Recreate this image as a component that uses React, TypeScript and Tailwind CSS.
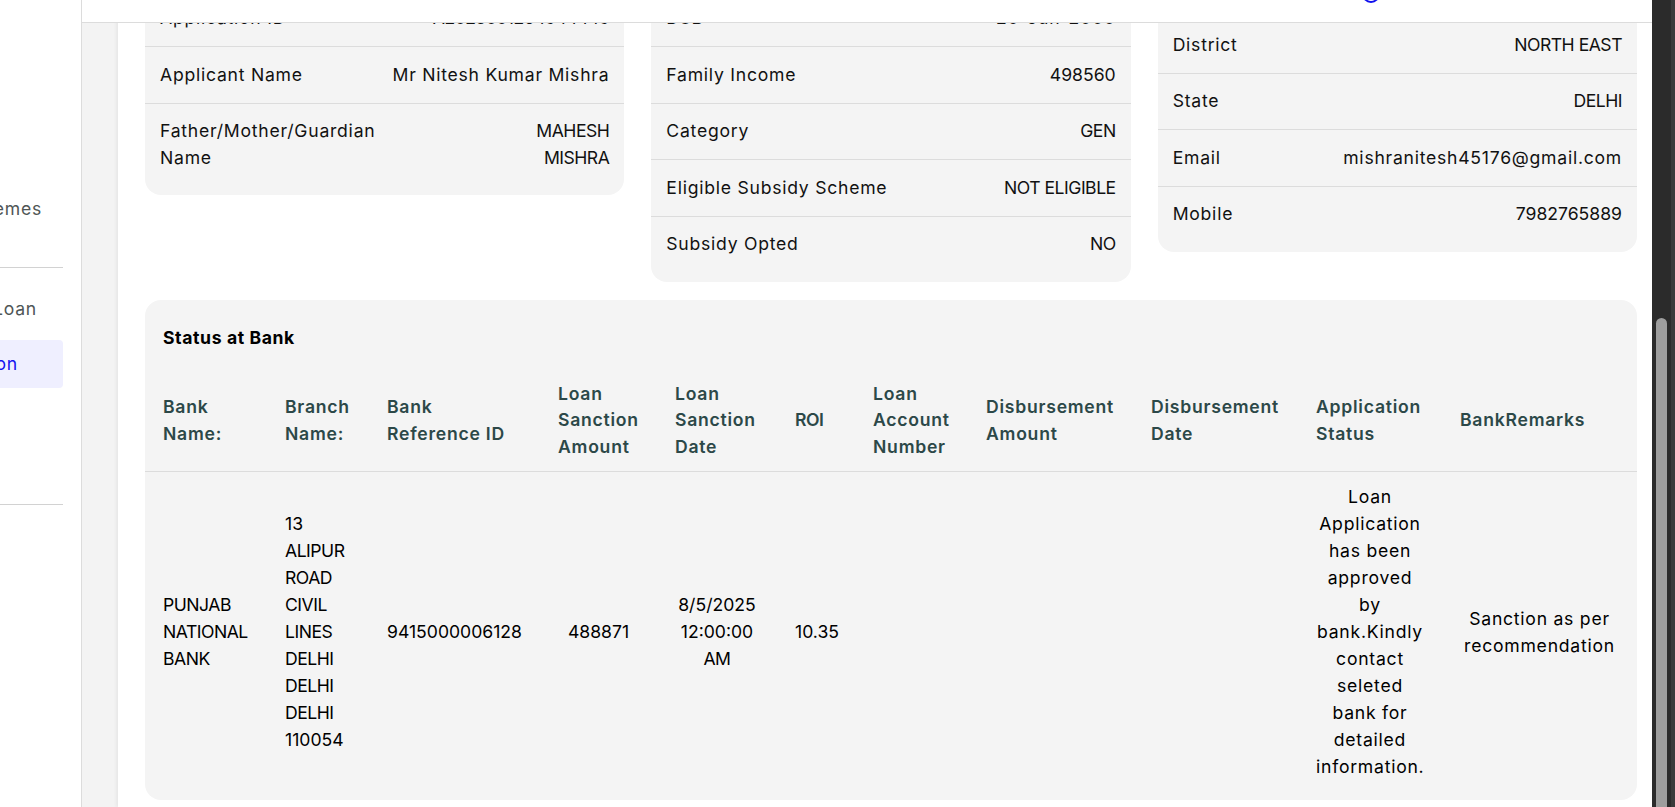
import React from "react";

type Row = { label: string[]; value: string[] };

const card1: Row[] = [
  { label: ["Loan Type"], value: ["Education Loan"] },
  { label: ["Application ID"], value: ["A2025001264944449"] },
  { label: ["Applicant Name"], value: ["Mr Nitesh Kumar Mishra"] },
  { label: ["Father/Mother/Guardian", "Name"], value: ["MAHESH", "MISHRA"] },
];

const card2: Row[] = [
  { label: ["Gender"], value: ["MALE"] },
  { label: ["DOB"], value: ["20-Jun-2000"] },
  { label: ["Family Income"], value: ["498560"] },
  { label: ["Category"], value: ["GEN"] },
  { label: ["Eligible Subsidy Scheme"], value: ["NOT ELIGIBLE"] },
  { label: ["Subsidy Opted"], value: ["NO"] },
];

const card3: Row[] = [
  { label: ["Address"], value: ["H NO 12 GALI NO 4", "KARAWAL NAGAR"] },
  { label: ["District"], value: ["NORTH EAST"] },
  { label: ["State"], value: ["DELHI"] },
  { label: ["Email"], value: ["mishranitesh45176@gmail.com"] },
  { label: ["Mobile"], value: ["7982765889"] },
];

function track(t: string) {
  if (/[a-z]/.test(t)) return "tracking-[0.75px]";
  if (/[A-Z]/.test(t)) return "tracking-[-0.5px]";
  return "tracking-[0px]";
}

function Line({ t }: { t: string }) {
  return <div className={"whitespace-nowrap " + track(t)}>{t}</div>;
}

function InfoCard({ rows }: { rows: Row[] }) {
  return (
    <div className="rounded-2xl bg-[#f4f4f4] pt-[9px] pb-[9px]">
      {rows.map((r, i) => (
        <div
          key={i}
          className={
            "flex justify-between gap-4 px-[15px] py-[14.5px] leading-[26.6px] " +
            (i < rows.length - 1 ? "border-b border-[#dcdcdc]" : "")
          }
        >
          <div className="text-left">
            {r.label.map((t, j) => (
              <Line key={j} t={t} />
            ))}
          </div>
          <div className="text-right">
            {r.value.map((t, j) => (
              <Line key={j} t={t} />
            ))}
          </div>
        </div>
      ))}
    </div>
  );
}

type Col = { w: string; head: string[]; body: string[]; align: "left" | "center" };

const cols: Col[] = [
  { w: "w-[122px]", head: ["Bank", "Name:"], body: ["PUNJAB", "NATIONAL", "BANK"], align: "left" },
  {
    w: "w-[102px]",
    head: ["Branch", "Name:"],
    body: ["13", "ALIPUR", "ROAD", "CIVIL", "LINES", "DELHI", "DELHI", "DELHI", "110054"],
    align: "left",
  },
  { w: "w-[171px]", head: ["Bank", "Reference ID"], body: ["9415000006128"], align: "left" },
  { w: "w-[117px]", head: ["Loan", "Sanction", "Amount"], body: ["488871"], align: "center" },
  { w: "w-[120px]", head: ["Loan", "Sanction", "Date"], body: ["8/5/2025", "12:00:00", "AM"], align: "center" },
  { w: "w-[78px]", head: ["ROI"], body: ["10.35"], align: "left" },
  { w: "w-[113px]", head: ["Loan", "Account", "Number"], body: [], align: "left" },
  { w: "w-[165px]", head: ["Disbursement", "Amount"], body: [], align: "left" },
  { w: "w-[165px]", head: ["Disbursement", "Date"], body: [], align: "left" },
  {
    w: "w-[144px]",
    head: ["Application", "Status"],
    body: [
      "Loan",
      "Application",
      "has been",
      "approved",
      "by",
      "bank.Kindly",
      "contact",
      "seleted",
      "bank for",
      "detailed",
      "information.",
    ],
    align: "center",
  },
  { w: "w-[195px]", head: ["BankRemarks"], body: ["Sanction as per", "recommendation"], align: "center" },
];

function StatusCard() {
  return (
    <div className="mt-[18px] rounded-2xl bg-[#f4f4f4] pt-[25.5px] pb-[8px]">
      <div className="px-[18px] font-bold leading-[26.6px] tracking-[0.6px] text-black">Status at Bank</div>
      <table className="mt-[19px] w-full table-fixed border-collapse">
        <colgroup>
          {cols.map((c, i) => (
            <col key={i} className={c.w} />
          ))}
        </colgroup>
        <thead>
          <tr className="border-b border-[#dcdcdc]">
            {cols.map((c, i) => (
              <th
                key={i}
                className="px-[18px] py-[10px] text-left align-middle font-semibold leading-[26.7px] text-[#2c4848]"
              >
                {c.head.map((t, j) => (
                  <Line key={j} t={t} />
                ))}
              </th>
            ))}
          </tr>
        </thead>
        <tbody>
          <tr>
            {cols.map((c, i) => (
              <td
                key={i}
                className={
                  "px-[18px] py-[11.5px] align-middle leading-[27px] text-black " +
                  (c.align === "center" ? "text-center" : "text-left")
                }
              >
                {c.body.map((t, j) => (
                  <Line key={j} t={t} />
                ))}
              </td>
            ))}
          </tr>
        </tbody>
      </table>
    </div>
  );
}

function SideItem({ text, pr, active }: { text: string; pr: string; active?: boolean }) {
  return (
    <div
      className={
        "flex h-[48px] w-[63px] items-center justify-end overflow-hidden whitespace-nowrap rounded-r-[4px] tracking-[0.75px] " +
        pr +
        (active ? " bg-[#efefff] text-[#1414f0]" : " text-[#4f5656]")
      }
    >
      <span>{text}</span>
    </div>
  );
}

export default function App() {
  return (
    <div className="flex h-screen w-full overflow-hidden bg-white text-[17.6px] text-[#111] [font-family:Inter,'Noto_Sans',sans-serif]">
      <aside className="flex w-[82px] shrink-0 flex-col overflow-hidden border-r border-[#dcdcdc] bg-white pt-[185px]">
        <SideItem text="Government Schemes" pr="pr-[21px]" />
        <div className="mt-[34px] h-px w-[63px] bg-[#d2d2d2]" />
        <div className="mt-[17px]">
          <SideItem text="Apply for Loan" pr="pr-[26px]" />
        </div>
        <div className="mt-[7px]">
          <SideItem text="Track Application" pr="pr-[45px]" active />
        </div>
        <div className="mt-[116px] h-px w-[63px] bg-[#d2d2d2]" />
      </aside>

      <main className="relative flex-1 overflow-hidden bg-[#f3f3f3]">
        <header className="absolute left-0 right-0 top-0 z-10 h-[23px] border-b border-[#dcdcdc] bg-white">
          <div className="absolute left-[1280px] top-[-15px] h-[18px] w-[18px] rounded-full border-[2.5px] border-[#1010ee]" />
        </header>
        <div className="ml-[36px] flex h-full flex-col bg-white pl-[27px] pr-[15px] shadow-[-2px_0_3px_rgba(0,0,0,0.05)]">
          <div className="-mt-[75px]">
            <div className="grid grid-cols-3 items-start gap-[27px]">
              <InfoCard rows={card1} />
              <InfoCard rows={card2} />
              <InfoCard rows={card3} />
            </div>
            <StatusCard />
          </div>
        </div>
      </main>

      <div className="flex w-[23px] shrink-0 flex-col border-r-4 border-[#3a3a3a] bg-[#2b2b2b] px-[4px] pt-[318px]">
        <div className="flex-1 rounded-t-full bg-[#9e9e9e]" />
      </div>
    </div>
  );
}
